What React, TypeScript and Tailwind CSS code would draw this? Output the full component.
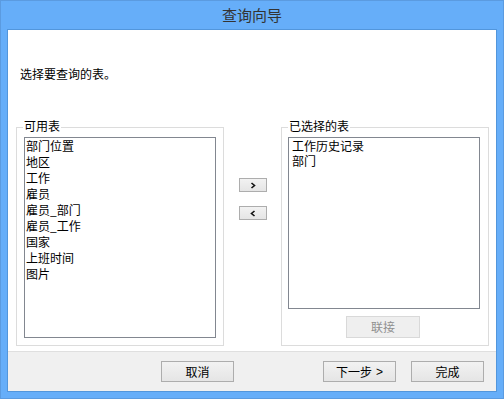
import React from "react";

const font = { fontFamily: '"Noto Sans CJK SC", "Liberation Sans", sans-serif' };

function Btn({ children, w = "w-[73px]", className = "" }: { children: React.ReactNode; w?: string; className?: string }) {
  return (
    <div
      className={`${w} h-[21px] border border-[#adadad] bg-linear-to-b from-[#f2f2f2] to-[#e5e5e5] flex items-center justify-center text-[12px] leading-[16px] text-black ${className}`}
    >
      {children}
    </div>
  );
}

function Chevron({ dir }: { dir: "r" | "l" }) {
  return (
    <svg width="6" height="7" viewBox="0 0 6 7">
      <polyline
        points={dir === "r" ? "1.5,1 4.5,3.5 1.5,6" : "4.5,1 1.5,3.5 4.5,6"}
        fill="none"
        stroke="#111"
        strokeWidth="1.6"
      />
    </svg>
  );
}

export default function App() {
  const left = ["部门位置", "地区", "工作", "雇员", "雇员_部门", "雇员_工作", "国家", "上班时间", "图片"];
  const right = ["工作历史记录", "部门"];
  return (
    <div style={font} className="w-[504px] h-[399px] bg-[#66aef9] border border-[#5b9be0] flex flex-col">
      <div className="h-[28px] flex items-center justify-center text-[15px] text-[#333]">查询向导</div>
      <div className="mx-[6px] mb-[6px] flex-1 border border-[#5296dc] flex flex-col bg-white">
        <div className="h-[321px] flex flex-col">
          <div className="pl-[12px] pt-[36px] text-[12px] leading-[16px] text-black">选择要查询的表。</div>
          <div className="mt-[45px] flex items-start">
            <div className="relative ml-[8px] w-[208px] h-[219px] border border-[#dcdcdc] pt-[9px] pl-[7px]">
              <span className="absolute -top-[10px] left-[6px] bg-white px-[1px] text-[12px] leading-[16px] text-black">可用表</span>
              <div className="w-[192px] h-[201px] border border-[#828790] pl-[1px] text-[12px] leading-[16px] text-black">
                {left.map((t) => (
                  <div key={t}>{t}</div>
                ))}
              </div>
            </div>
            <div className="ml-[15px] w-[28px] flex flex-col pt-[51px] gap-[14px]">
              <div className="w-[28px] h-[14px] border border-[#adadad] bg-linear-to-b from-[#f2f2f2] to-[#e5e5e5] flex items-center justify-center">
                <Chevron dir="r" />
              </div>
              <div className="w-[28px] h-[14px] border border-[#adadad] bg-linear-to-b from-[#f2f2f2] to-[#e5e5e5] flex items-center justify-center">
                <Chevron dir="l" />
              </div>
            </div>
            <div className="relative ml-[14px] w-[208px] h-[219px] border border-[#dcdcdc] pt-[9px] pl-[6px]">
              <span className="absolute -top-[10px] left-[6px] bg-white px-[1px] text-[12px] leading-[16px] text-black">已选择的表</span>
              <div className="w-[192px] h-[172px] border border-[#828790] pl-[3px] text-[12px] leading-[15px] text-black">
                {right.map((t) => (
                  <div key={t}>{t}</div>
                ))}
              </div>
              <div className="mt-[7px] ml-[58px] w-[74px] h-[22px] border border-[#d9d9d9] bg-[#efefef] flex items-center justify-center text-[12px] leading-[16px] text-[#8f8f8f]">
                联接
              </div>
            </div>
          </div>
        </div>
        <div className="flex-1 border-t border-[#dfdfdf] bg-[#f0f0f0] flex items-start pt-[9px] pl-[153px]">
          <Btn>取消</Btn>
          <Btn className="ml-[89px]">
            下一步 <span className="ml-[4px]" style={{ fontFamily: '"Liberation Sans", sans-serif' }}>&gt;</span>
          </Btn>
          <Btn className="ml-[15px]">完成</Btn>
        </div>
      </div>
    </div>
  );
}
